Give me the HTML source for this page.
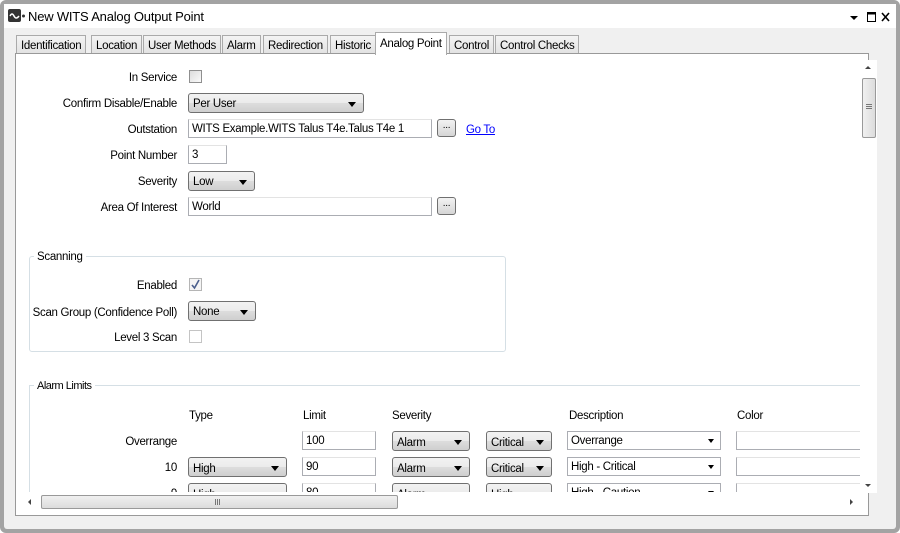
<!DOCTYPE html>
<html style="overflow:hidden;width:900px;height:533px"><head><meta charset="utf-8"><style>
*{box-sizing:border-box}
body{margin:0;width:900px;height:533px;overflow:hidden;background:#fff;font-family:"Liberation Sans",sans-serif;font-size:11.5px;color:#000;letter-spacing:-0.3px;position:relative}
.a{position:absolute}
#win{position:absolute;left:0;top:0;width:900px;height:533px;background:#a3a3a3;border-radius:6px}
#inner{position:absolute;left:4px;top:4px;width:892px;height:525px;background:#f0f0f0;border-radius:3px}
#title{position:absolute;left:0;top:0;width:892px;height:24px;background:#fff}
.tab{position:absolute;top:35px;height:19px;border:1px solid #aaa;border-bottom:none;background:linear-gradient(#f4f4f4,#e2e2e2);padding:4px 4px 0 4px;white-space:nowrap}
#panel{position:absolute;left:15px;top:53px;width:854px;height:463px;border:1px solid #999;background:#fff}
#clip{position:absolute;left:16px;top:54px;width:844px;height:438px;overflow:hidden;background:#fff}
.lbl{position:absolute;text-align:right;width:170px;left:7px;margin-top:2px}
.h{margin-top:2px}
.cb{position:absolute;width:13px;height:13px;border:1px solid #8f8f8f;background:linear-gradient(135deg,#dcdcdc,#fafafa)}
.sel{position:absolute;height:20px;border:1px solid #707070;border-radius:3px;background:linear-gradient(#f2f2f2 0%,#ebebeb 50%,#dddddd 51%,#cfcfcf 100%);padding:4px 0 0 4px;white-space:nowrap;overflow:hidden}
.sel:after{content:"";position:absolute;right:7px;top:8px;border-left:4px solid transparent;border-right:4px solid transparent;border-top:5px solid #000}
.dsel{position:absolute;height:19px;border:1px solid #abadb3;background:#fff;padding:3px 0 0 3px;white-space:nowrap}
.dsel:after{content:"";position:absolute;right:6px;top:7px;border-left:3px solid transparent;border-right:3px solid transparent;border-top:4px solid #000}
.txt{position:absolute;height:19px;border:1px solid #abadb3;border-top-color:#e3e3e3;background:#fff;padding:3px 0 0 3px;white-space:nowrap;overflow:hidden}
.btn{position:absolute;width:19px;height:18px;border:1px solid #707070;border-radius:3px;background:linear-gradient(#f2f2f2,#d6d6d6);text-align:center;font-size:10px;line-height:12px}
.grp{position:absolute;border:1px solid #d5dfe5;border-radius:3px}
.gl{position:absolute;background:#fff;padding:0 3px}
</style></head><body>
<div id="win"><div id="inner">
 <div id="title">
  <svg class="a" style="left:4px;top:5px" width="18" height="14"><rect x="0" y="0" width="13" height="13" rx="2" fill="#333"/><path d="M2 7 Q4 3 6 7 T11 7" stroke="#fff" stroke-width="1.5" fill="none"/><circle cx="15.5" cy="7" r="1.5" fill="#333"/></svg>
  <div class="a" style="left:24px;top:5px;font-size:13px;letter-spacing:-0.2px">New WITS Analog Output Point</div>
  <svg class="a" style="left:846px;top:8px" width="44" height="12"><path d="M0 4 L8 4 L4 8Z" fill="#000"/><rect x="17.5" y="0.5" width="8" height="9" fill="none" stroke="#000"/><rect x="17.5" y="0.5" width="8" height="2" fill="#000"/><path d="M32 1 L39 9 M39 1 L32 9" stroke="#000" stroke-width="1.6"/></svg>
 </div>
</div></div>
<div class="tab" style="left:16px">Identification</div>
<div class="tab" style="left:91px">Location</div>
<div class="tab" style="left:143px">User Methods</div>
<div class="tab" style="left:222px">Alarm</div>
<div class="tab" style="left:263px">Redirection</div>
<div class="tab" style="left:330px">Historic</div>
<div class="tab" style="left:375px;top:32px;height:23px;background:#fff;z-index:3;padding-top:5px">Analog Point</div>
<div class="tab" style="left:449px">Control</div>
<div class="tab" style="left:495px">Control Checks</div>
<div id="panel"></div>
<div id="clip">
 <div style="position:absolute;left:-16px;top:-54px;width:900px;height:540px;overflow:hidden">
  <div class="lbl" style="top:70px">In Service</div><div class="cb" style="left:189px;top:70px"></div>
  <div class="lbl" style="top:96px">Confirm Disable/Enable</div><div class="sel" style="left:188px;top:93px;width:176px">Per User</div>
  <div class="lbl" style="top:122px">Outstation</div><div class="txt" style="left:188px;top:119px;width:244px">WITS Example.WITS Talus T4e.Talus T4e 1</div>
  <div class="btn" style="left:437px;top:119px">...</div>
  <div class="a h" style="left:466px;top:122px;color:#0000ff;text-decoration:underline">Go To</div>
  <div class="lbl" style="top:148px">Point Number</div><div class="txt" style="left:188px;top:145px;width:39px">3</div>
  <div class="lbl" style="top:174px">Severity</div><div class="sel" style="left:188px;top:171px;width:67px">Low</div>
  <div class="lbl" style="top:200px">Area Of Interest</div><div class="txt" style="left:188px;top:197px;width:244px">World</div>
  <div class="btn" style="left:437px;top:197px">...</div>

  <div class="grp" style="left:29px;top:256px;width:477px;height:96px"></div>
  <div class="gl h" style="left:34px;top:249px">Scanning</div>
  <div class="lbl" style="top:278px">Enabled</div><div class="cb" style="left:189px;top:278px;border-color:#b5b5b5;background:#f4f4f4"><svg width="11" height="11" style="position:absolute;left:0;top:0"><path d="M2 6 L4.5 9 L9 1" stroke="#4a5e8c" stroke-width="1.6" fill="none"/></svg></div>
  <div class="lbl" style="top:305px">Scan Group (Confidence Poll)</div><div class="sel" style="left:188px;top:301px;width:68px">None</div>
  <div class="lbl" style="top:330px">Level 3 Scan</div><div class="cb" style="left:189px;top:330px;border-color:#c4c4c4;background:#fff"></div>

  <div class="a" style="left:29px;top:385px;width:840px;height:1px;background:#d5dfe5"></div>
  <div class="a" style="left:29px;top:385px;width:1px;height:200px;background:#d5dfe5"></div>
  <div class="gl h" style="left:34px;top:378px;font-size:11px;letter-spacing:-0.5px">Alarm Limits</div>
  <div class="a h" style="left:189px;top:408px">Type</div>
  <div class="a h" style="left:303px;top:408px">Limit</div>
  <div class="a h" style="left:392px;top:408px">Severity</div>
  <div class="a h" style="left:569px;top:408px">Description</div>
  <div class="a h" style="left:737px;top:408px">Color</div>

  <div class="lbl" style="top:434px">Overrange</div>
  <div class="txt" style="left:302px;top:431px;width:74px">100</div>
  <div class="sel" style="left:392px;top:431px;width:78px;padding-top:5px">Alarm</div>
  <div class="sel" style="left:486px;top:431px;width:66px;padding-top:5px">Critical</div>
  <div class="dsel" style="left:567px;top:431px;width:154px">Overrange</div>
  <div class="txt" style="left:736px;top:431px;width:130px"></div>

  <div class="lbl" style="top:460px">10</div>
  <div class="sel" style="left:188px;top:457px;width:99px;padding-top:5px">High</div>
  <div class="txt" style="left:302px;top:457px;width:74px">90</div>
  <div class="sel" style="left:392px;top:457px;width:78px;padding-top:5px">Alarm</div>
  <div class="sel" style="left:486px;top:457px;width:66px;padding-top:5px">Critical</div>
  <div class="dsel" style="left:567px;top:457px;width:154px">High - Critical</div>
  <div class="txt" style="left:736px;top:457px;width:130px"></div>

  <div class="lbl" style="top:486px">9</div>
  <div class="sel" style="left:188px;top:483px;width:99px;padding-top:5px">High</div>
  <div class="txt" style="left:302px;top:483px;width:74px">80</div>
  <div class="sel" style="left:392px;top:483px;width:78px;padding-top:5px">Alarm</div>
  <div class="sel" style="left:486px;top:483px;width:66px;padding-top:5px">High</div>
  <div class="dsel" style="left:567px;top:483px;width:154px">High - Caution</div>
  <div class="txt" style="left:736px;top:483px;width:130px"></div>
 </div>
</div>
<div class="a" style="left:860px;top:60px;width:17px;height:433px;background:#fff"></div>
<div class="a" style="left:865px;top:66px;width:0;height:0;border-left:3px solid transparent;border-right:3px solid transparent;border-bottom:3px solid #444"></div>
<div class="a" style="left:862px;top:78px;width:14px;height:60px;border:1px solid #999;border-radius:2px;background:linear-gradient(90deg,#f0f0f0,#dcdcdc)"></div>
<div class="a" style="left:866px;top:104px;width:6px;height:5px;border-top:1px solid #777;border-bottom:1px solid #777"></div>
<div class="a" style="left:866px;top:106px;width:6px;height:1px;background:#777"></div>
<div class="a" style="left:865px;top:484px;width:0;height:0;border-left:3px solid transparent;border-right:3px solid transparent;border-top:3px solid #444"></div>
<div class="a" style="left:16px;top:493px;width:844px;height:17px;background:#fff"></div>
<div class="a" style="left:28px;top:499px;width:0;height:0;border-top:3px solid transparent;border-bottom:3px solid transparent;border-right:3px solid #444"></div>
<div class="a" style="left:41px;top:495px;width:357px;height:14px;border:1px solid #999;border-radius:2px;background:linear-gradient(#f0f0f0,#dcdcdc)"></div>
<div class="a" style="left:215px;top:499px;width:5px;height:6px;border-left:1px solid #777;border-right:1px solid #777"></div>
<div class="a" style="left:217px;top:499px;width:1px;height:6px;background:#777"></div>
<div class="a" style="left:850px;top:499px;width:0;height:0;border-top:3px solid transparent;border-bottom:3px solid transparent;border-left:3px solid #444"></div>
</body></html>
